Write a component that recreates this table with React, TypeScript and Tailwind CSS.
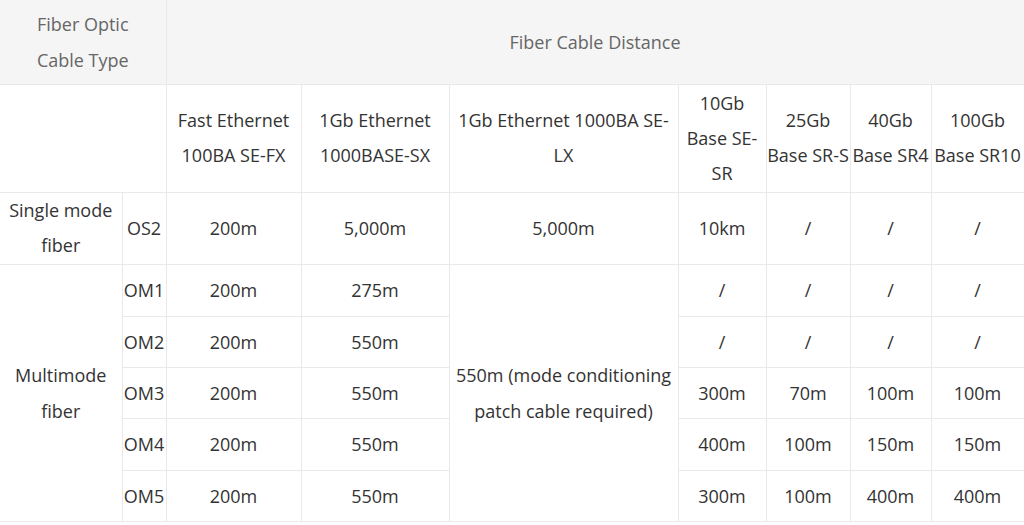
import React from "react";

const cell = "border border-[#e9e9e9] p-0 text-center align-middle whitespace-nowrap";

const multimode = [
  { type: "OM1", fe: "200m", gb: "275m", ten: "/", tf: "/", forty: "/", hundred: "/", h: "h-[52px]" },
  { type: "OM2", fe: "200m", gb: "550m", ten: "/", tf: "/", forty: "/", hundred: "/", h: "h-[51px]" },
  { type: "OM3", fe: "200m", gb: "550m", ten: "300m", tf: "70m", forty: "100m", hundred: "100m", h: "h-[51px]" },
  { type: "OM4", fe: "200m", gb: "550m", ten: "400m", tf: "100m", forty: "150m", hundred: "150m", h: "h-[52px]" },
  { type: "OM5", fe: "200m", gb: "550m", ten: "300m", tf: "100m", forty: "400m", hundred: "400m", h: "h-[51px]" },
];

export default function App() {
  return (
    <div className="w-[1024px] h-[525px] bg-white overflow-hidden">
      <table
        className="w-[1024px] table-fixed border-collapse text-[18px] leading-9 text-[#333]"
        style={{ fontFamily: '"Open Sans", "Noto Sans", sans-serif' }}
      >
        <colgroup>
          <col className="w-[122px]" />
          <col className="w-[44px]" />
          <col className="w-[135px]" />
          <col className="w-[148px]" />
          <col className="w-[229px]" />
          <col className="w-[88px]" />
          <col className="w-[84px]" />
          <col className="w-[81px]" />
          <col className="w-[93px]" />
        </colgroup>
        <tbody>
          <tr className="h-[84px] bg-[#f5f5f5] text-[#666]">
            <td colSpan={2} className={`${cell} border-t-0 border-l-0`}>
              Fiber Optic
              <br />
              Cable Type
            </td>
            <td colSpan={7} className={`${cell} border-t-0`}>
              Fiber Cable Distance
            </td>
          </tr>
          <tr className="h-[108px] leading-[35px]">
            <td colSpan={2} className={`${cell} border-l-0`}></td>
            <td className={cell}>
              Fast Ethernet
              <br />
              100BA SE-FX
            </td>
            <td className={cell}>
              1Gb Ethernet
              <br />
              1000BASE-SX
            </td>
            <td className={cell}>
              1Gb Ethernet 1000BA SE-
              <br />
              LX
            </td>
            <td className={cell}>
              10Gb
              <br />
              Base SE-
              <br />
              SR
            </td>
            <td className={cell}>
              25Gb
              <br />
              Base SR-S
            </td>
            <td className={cell}>
              40Gb
              <br />
              Base SR4
            </td>
            <td className={cell}>
              100Gb
              <br />
              Base SR10
            </td>
          </tr>
          <tr className="h-[72px] leading-[35px]">
            <td className={`${cell} border-l-0`}>
              Single mode
              <br />
              fiber
            </td>
            <td className={cell}>OS2</td>
            <td className={cell}>200m</td>
            <td className={cell}>5,000m</td>
            <td className={cell}>5,000m</td>
            <td className={cell}>10km</td>
            <td className={cell}>/</td>
            <td className={cell}>/</td>
            <td className={cell}>/</td>
          </tr>
          {multimode.map((r, i) => (
            <tr key={r.type} className={r.h}>
              {i === 0 && (
                <td rowSpan={5} className={`${cell} border-l-0`}>
                  Multimode
                  <br />
                  fiber
                </td>
              )}
              <td className={cell}>{r.type}</td>
              <td className={cell}>{r.fe}</td>
              <td className={cell}>{r.gb}</td>
              {i === 0 && (
                <td rowSpan={5} className={cell}>
                  550m (mode conditioning
                  <br />
                  patch cable required)
                </td>
              )}
              <td className={cell}>{r.ten}</td>
              <td className={cell}>{r.tf}</td>
              <td className={cell}>{r.forty}</td>
              <td className={cell}>{r.hundred}</td>
            </tr>
          ))}
        </tbody>
      </table>
    </div>
  );
}
